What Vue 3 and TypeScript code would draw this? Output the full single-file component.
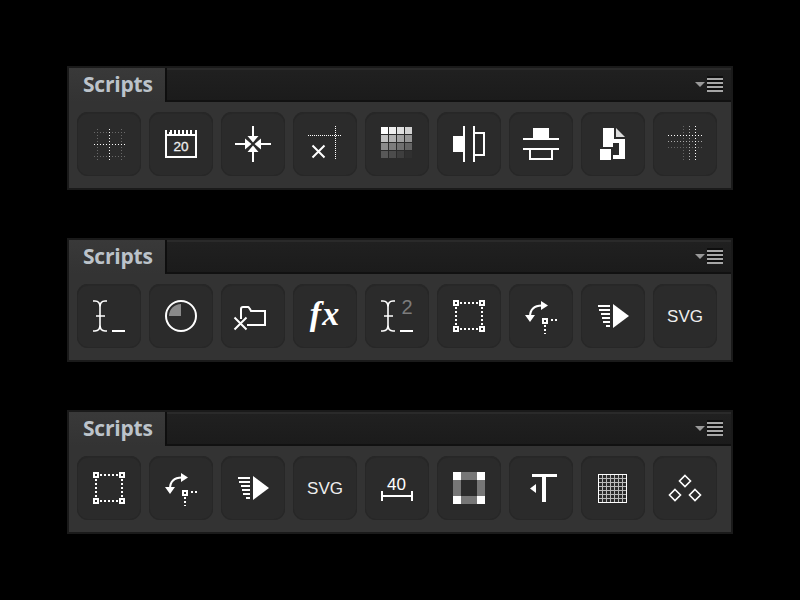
<template>
  <div class="page">
    <section v-for="(panel, p) in panels" :key="p" class="panel">
      <header class="head">
        <div class="tab">Scripts</div>
        <div class="bar">
          <span class="caret"></span>
          <span class="lines"><i></i><i></i><i></i><i></i></span>
        </div>
      </header>
      <div class="tools">
        <button v-for="(name, i) in panel" :key="i" class="tool">
          <svg width="64" height="64" viewBox="0 0 64 64" fill="none" stroke="none">
            <template v-if="name === 'guides'">
              <g stroke-width="1" stroke-dasharray="1 2" class="crisp">
                <path stroke="#6a6a6a" d="M20.5 17V48M44.5 17V48M17 20.5H48M17 44.5H48" />
                <path stroke="#fff" d="M32.5 17V48M17 32.5H48" />
              </g>
            </template>
            <template v-else-if="name === 'calendar'">
              <path stroke="#fff" stroke-width="2" class="crisp" d="M17 23H47V45H17Z" />
              <path fill="#fff" class="crisp" d="M16 18h2v4h-2zM20 20h2v2h-2zM21 18h2v4h-2zM25 18h2v4h-2zM29 18h2v4h-2zM33 18h2v4h-2zM37 18h2v4h-2zM41 18h2v4h-2zM46 18h2v4h-2z" />
              <text x="32" y="39" text-anchor="middle" class="num">20</text>
            </template>
            <template v-else-if="name === 'collapse'">
              <path fill="#fff" class="crisp" d="M31 14h2v10h-2zM31 40h2v10h-2zM14 31h10v2H14zM40 31h10v2H40z" />
              <path fill="#fff" d="M32 30.500L26.500 24H37.500ZM32 33.500L26.500 40H37.500ZM30.500 32L24 26.500V37.500ZM33.500 32L40 26.500V37.500Z" />
            </template>
            <template v-else-if="name === 'clearGuide'">
              <path stroke="#fff" stroke-dasharray="1 1" class="crisp" d="M15 23.500H49M42.500 14V48" />
              <path stroke="#fff" stroke-width="2" d="M19.500 33.500l12 12M31.500 33.500l-12 12" />
            </template>
            <template v-else-if="name === 'swatches'">
              <template v-for="(row, r) in swatchRows" :key="r">
                <rect v-for="(c, k) in row" :key="k" :x="16 + k * 8" :y="15 + r * 8" width="7" height="7" :fill="c" />
              </template>
            </template>
            <template v-else-if="name === 'alignV'">
              <path fill="#fff" class="crisp" d="M16 24h10v16H16zM26 14h2v36h-2zM36 14h2v36h-2z" />
              <path stroke="#fff" stroke-width="2" class="crisp" d="M38 21H47V43H38" />
            </template>
            <template v-else-if="name === 'alignH'">
              <path fill="#fff" class="crisp" d="M24 16h16v10H24zM14 26h36v2H14zM14 36h36v2H14z" />
              <path stroke="#fff" stroke-width="2" class="crisp" d="M21 38V47H43V38" />
            </template>
            <template v-else-if="name === 'document'">
              <path fill="#fff" class="crisp" d="M22 16H33V27H44V47H32V43H38V31H32V35H22ZM19 37H30V48H19Z" />
              <path fill="#ddd" d="M35 16L44 25H35Z" />
            </template>
            <template v-else-if="name === 'guides3'">
              <g stroke-width="1" stroke-dasharray="1 2" class="crisp">
                <path stroke="#666" d="M30.500 14V48M15 35.500H49" />
                <path stroke="#aaa" d="M36.500 14V48M15 29.500H49" />
                <path stroke="#fff" d="M42.500 14V48M15 23.500H49" />
              </g>
            </template>
            <template v-else-if="name === 'type' || name === 'type2'">
              <path stroke="#fff" stroke-width="1.600" d="M16 17h2c3 0 5 2 5 6V41c0 4-2 6-5 6h-2M30 17h-2c-3 0-5 2-5 6V41c0 4 2 6 5 6h2M19 32H28" />
              <path fill="#fff" class="crisp" d="M35 46H48V48H35Z" />
              <text v-if="name === 'type2'" x="42" y="30" text-anchor="middle" class="sup">2</text>
            </template>
            <template v-else-if="name === 'pie'">
              <circle cx="32" cy="32" r="15" stroke="#fff" stroke-width="2" />
              <path fill="#8a8a8a" d="M32 32V20A12 12 0 0 0 20 32Z" />
            </template>
            <template v-else-if="name === 'folder'">
              <path stroke="#fff" stroke-width="2" d="M20 35V25c0-1 1-2 2-2H27c1 0 1 1 2 2l1 2H44V41H26" />
              <path stroke="#fff" stroke-width="2" d="M13.500 33.500l12 12M25.500 33.500l-12 12" />
            </template>
            <template v-else-if="name === 'fx'">
              <text x="32" y="41" text-anchor="middle" class="fx">fx</text>
            </template>
            <template v-else-if="name === 'select'">
              <path stroke="#fff" stroke-width="2" stroke-dasharray="2 2" class="crisp" d="M19 19H45M19 45H45M19 19V45M45 19V45" />
              <g fill="#2b2b2b" stroke="#fff" stroke-width="2" class="crisp">
                <rect x="17" y="17" width="4" height="4" />
                <rect x="43" y="17" width="4" height="4" />
                <rect x="17" y="43" width="4" height="4" />
                <rect x="43" y="43" width="4" height="4" />
              </g>
            </template>
            <template v-else-if="name === 'rotate'">
              <path stroke="#fff" stroke-width="2" d="M21 33C21 26 25 21.500 33 21.500" />
              <path fill="#fff" d="M32 17L39 21.500L32 26ZM16 31H26L21 38Z" />
              <rect x="34" y="35" width="4" height="4" fill="#2b2b2b" stroke="#fff" stroke-width="2" class="crisp" />
              <path stroke="#fff" stroke-width="2" stroke-dasharray="2 2" class="crisp" d="M42 36H48M36 41V50" />
            </template>
            <template v-else-if="name === 'play'">
              <path fill="#fff" d="M32 20L48 32L32 44Z" />
              <path fill="#fff" class="crisp" d="M17 21h12v2H17zM18 25h11v2H18zM20 29h9v2h-9zM21 33h8v2h-8zM22 37h7v2h-7zM25 41h4v2h-4z" />
            </template>
            <template v-else-if="name === 'svg'">
              <text x="32" y="38" text-anchor="middle" class="svgt">SVG</text>
            </template>
            <template v-else-if="name === 'measure'">
              <text x="31.500" y="34" text-anchor="middle" class="meas">40</text>
              <path fill="#fff" class="crisp" d="M16 35h2v10h-2zM46 35h2v10h-2zM16 39h32v2H16z" />
            </template>
            <template v-else-if="name === 'frame'">
              <path fill="#777" class="crisp" d="M24 16h16v8H24zM24 40h16v8H24zM16 24h8v16h-8zM40 24h8v16h-8z" />
              <path fill="#fff" class="crisp" d="M16 16h8v8h-8zM40 16h8v8h-8zM16 40h8v8h-8zM40 40h8v8h-8z" />
            </template>
            <template v-else-if="name === 'textT'">
              <path fill="#fff" class="crisp" d="M23 18H48V21H37V46H33V21H23Z" />
              <path fill="#fff" d="M27 28V37L21 32.500Z" />
            </template>
            <template v-else-if="name === 'grid'">
              <path stroke="#bbb" class="crisp" d="M21.500 18V47M25.500 18V47M29.500 18V47M33.500 18V47M37.500 18V47M41.500 18V47M17 22.500H46M17 26.500H46M17 30.500H46M17 34.500H46M17 38.500H46M17 42.500H46" />
              <rect x="17.500" y="18.500" width="28" height="28" stroke="#fff" class="crisp" />
            </template>
            <template v-else-if="name === 'diamonds'">
              <g stroke="#fff" stroke-width="1.600">
                <path d="M32 19.500L37.500 25L32 30.500L26.500 25Z" />
                <path d="M22 33.500L27.500 39L22 44.500L16.500 39Z" />
                <path d="M42 33.500L47.500 39L42 44.500L36.500 39Z" />
              </g>
            </template>
          </svg>
        </button>
      </div>
    </section>
  </div>
</template>

<script setup lang="ts">
// three copies of the same panel, only the tools differ
const panels: string[][] = [
  ['guides', 'calendar', 'collapse', 'clearGuide', 'swatches', 'alignV', 'alignH', 'document', 'guides3'],
  ['type', 'pie', 'folder', 'fx', 'type2', 'select', 'rotate', 'play', 'svg'],
  ['select', 'rotate', 'play', 'svg', 'measure', 'frame', 'textT', 'grid', 'diamonds'],
];

const swatchRows: string[][] = [
  ['#ffffff', '#eeeeee', '#e0e0e0', '#d2d2d2'],
  ['#c0c0c0', '#b0b0b0', '#a0a0a0', '#949494'],
  ['#8a8a8a', '#7c7c7c', '#707070', '#646464'],
  ['#585858', '#4c4c4c', '#3e3e3e', '#303030'],
];
</script>

<style scoped>
.page {
  width: 800px;
  height: 600px;
  box-sizing: border-box;
  padding: 66px 67px 0;
  display: flex;
  flex-direction: column;
  gap: 48px;
}

.panel {
  height: 124px;
  box-sizing: border-box;
  background: #333;
  border: 2px solid #1a1a1a;
  display: flex;
  flex-direction: column;
}

.head {
  height: 34px;
  display: flex;
}

.tab {
  width: 96px;
  box-sizing: border-box;
  padding-left: 14px;
  font: 700 21px/32px "Open Sans", sans-serif;
  letter-spacing: -0.2px;
  color: #bcc3ca;
  background: linear-gradient(#393939, #333);
}

.bar {
  flex: 1;
  box-sizing: border-box;
  background: linear-gradient(#2a2a2a 0, #2a2a2a 2px, #202020 2px, #1b1b1b 100%);
  border-left: 2px solid #0e0e0e;
  border-bottom: 2px solid #111;
  display: flex;
  align-items: center;
  justify-content: flex-end;
  padding-right: 8px;
  gap: 2px;
}

.caret {
  width: 0;
  height: 0;
  margin-top: 1px;
  border-left: 5px solid transparent;
  border-right: 5px solid transparent;
  border-top: 5px solid #999;
}

.lines {
  width: 16px;
  box-sizing: border-box;
  padding-top: 2px;
  display: flex;
  flex-direction: column;
  gap: 2px;
  background: #0e0e0e;
}

.lines i {
  height: 2px;
  background: #a6a6a6;
}

.tools {
  display: flex;
  gap: 8px;
  padding: 10px 8px 0;
}

.tool {
  width: 64px;
  height: 64px;
  padding: 0;
  box-sizing: border-box;
  border: 0;
  border-radius: 11px;
  background: #2b2b2b;
  box-shadow: inset 0 0 0 1px #272727, inset 0 2px 0 #282828;
}

.tool svg {
  display: block;
}

.crisp {
  shape-rendering: crispEdges;
}

.num {
  font: 400 13.5px "Liberation Sans", sans-serif;
  fill: #eee;
  stroke: #eee;
  stroke-width: 0.3px;
}

.sup {
  font: 400 20px "Liberation Sans", sans-serif;
  fill: #7c7c7c;
}

.fx {
  font: italic 700 34px "Liberation Serif", serif;
  letter-spacing: 1px;
  fill: #fff;
}

.svgt {
  font: 400 17px "Liberation Sans", sans-serif;
  fill: #eee;
}

.meas {
  font: 400 17px "Liberation Sans", sans-serif;
  fill: #fff;
}
</style>

<style>
html,
body {
  background: #000;
}
</style>
